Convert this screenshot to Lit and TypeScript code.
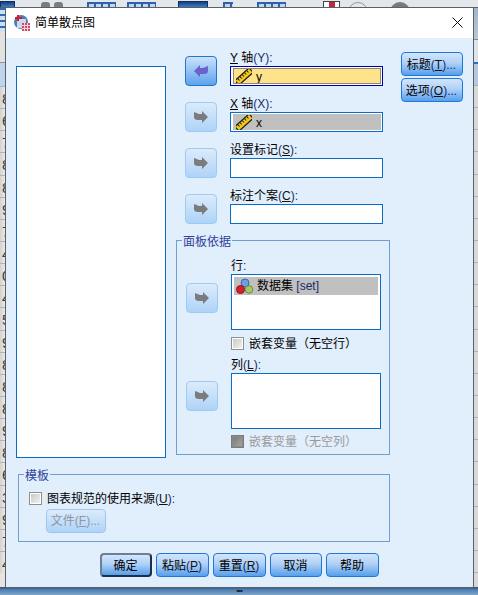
import { LitElement, html, css, svg } from "lit";
import { customElement } from "lit/decorators.js";

const arrow = (left: boolean) => html`<svg class="arr ${left ? "l" : "r"}" width="14" height="12" viewBox="0 0 14 12"><path d="M0 6 L6 0 V3 H9 L14 1 V6 Q14 9 10 9 H6 V12 Z"/></svg>`;
const ruler = html`<svg class="ico" width="16" height="15" viewBox="0 0 16 15"><g transform="rotate(-42 8 7.500)"><rect x="-1.500" y="4.500" width="19" height="6" fill="#f4c81c" stroke="#1a1a1a" stroke-width="1.200"/><path d="M2 5v2.500M5 5v2.500M8 5v2.500M11 5v2.500M14 5v2.500" stroke="#1a1a1a" stroke-width="1"/></g></svg>`;
const balls = html`<svg class="ico" width="18" height="17" viewBox="0 0 18 17"><circle cx="9" cy="5" r="4" fill="#6d9fe0" stroke="#3a67a8"/><circle cx="4.500" cy="11.500" r="4" fill="#d3202c" stroke="#8e1420"/><circle cx="13" cy="11.500" r="3.800" fill="#a4c868" stroke="#6b8f3a"/></svg>`;
const appIcon = svg`<svg width="16" height="16" viewBox="0 0 16 16"><circle cx="7" cy="7" r="7" fill="#4c7fb5"/><path d="M3 4h9v9H3z" fill="#c9d9ee"/><path d="M4 0v6M1 3h7" stroke="#d21c2c" stroke-width="2"/><rect x="8" y="8" width="8" height="8" fill="#d04a64"/><path d="M8 10.500h8M8 13.500h8M10.500 8v8M13.500 8v8" stroke="#f5d5dc"/></svg>`;

const M = (pre: string, key: string, post = "") => html`${pre}<span class="lat">(<u>${key}</u>)${post}</span>`;

@customElement("app-root")
export class AppRoot extends LitElement {
  static styles = css`
    :host { display: block; position: relative; width: 478px; height: 595px; overflow: hidden; background: #e6e6e4;
      font: 12px/14px "Liberation Sans", "Noto Sans CJK SC", sans-serif; color: #000; }
    * { box-sizing: border-box; }
    .top { position: absolute; inset: 0 0 auto 0; height: 8px; overflow: hidden; background: #e3e6ea; border-bottom: 1px solid #5a5f66; }
    .top i { position: absolute; top: 2px; height: 8px; display: block; }
    .tb1 { background: repeating-linear-gradient(90deg, #2f62ad 0 2px, #c4d6ee 2px 7px); border-top: 2px solid #2f62ad; }
    .tb2 { top: 1px !important; background: linear-gradient(#153f88, #3f8bd2); border: 1px solid #1a2c58; }
    .tb3 { background: #7d7d7d; border-radius: 3px 3px 0 0; }
    .tb4 { background: linear-gradient(90deg, #fff 0 5px, #c2283a 5px 11px, #fff 11px); border: 1px solid #444; top: 1px !important; }
    .tb5 { background: transparent; border: 1px solid #999; border-radius: 50%; height: 20px !important; }
    .tb6 { background: #7a7a7a; border-radius: 50%; height: 20px !important; }
    .side { position: absolute; left: 0; top: 8px; width: 6px; bottom: 8px; overflow: hidden; background: #e6e4e0; }
    .side .hd { height: 24px; background: repeating-linear-gradient(#2d6fb0 0 2px, #cfe0f2 2px 6px); }
    .side .hd2 { height: 31px; background: #e2e2e0; border-bottom: 1px solid #8a94a0; }
    .side .hd3 { height: 23px; background: #bfd3ea; }
    .side div.n { height: 22.150px; border-top: 1px solid #aab5c2; font: 15px/23px "Liberation Sans", sans-serif; color: #3a3a3a; white-space: nowrap; padding-left: 2px; background: linear-gradient(90deg, #d4d2ce, #efeeea); }
    .rs { position: absolute; right: 0; top: 8px; width: 5px; bottom: 8px; background: #d8d8d6; }
    .rs .a { height: 32px; background: linear-gradient(#a2b5ca, #b9c8d8); border-bottom: 1px solid #7d8a98; }
    .rs .b { height: 24px; background: #dfe3e8; border-bottom: 2px solid #2a6fc0; }
    .rs .c { height: 22px; background: #b4c8de; border-bottom: 1px solid #9fb0c4; }
    .rs .d { height: 22.150px; border-bottom: 1px solid #a3b2c4; }
    .bot { position: absolute; left: 0; right: 0; bottom: 0; height: 8px; background: linear-gradient(#2f4f74, #4f7fb2 35%, #7ea5cd); color: #123; font: 8px/8px "Liberation Sans", sans-serif; text-align: center; letter-spacing: -1px; }
    .dialog { position: absolute; left: 6px; top: 8px; width: 467px; height: 579px; background: #e1eefc; box-shadow: 0 0 0 1px #5a6068; display: flex; flex-direction: column; }
    .title { height: 30px; flex: none; background: #fff; display: flex; align-items: center; padding-left: 8px; gap: 5px; position: relative; }
    .title svg.close { position: absolute; right: 10px; top: 9px; }
    .main { display: flex; padding: 18px 0 0 10px; }
    .vars { width: 150px; height: 392px; margin-top: 10px; background: #fff; border: 1px solid #0a6cc4; flex: none; }
    .right { margin-left: 10px; width: 214px; flex: none; }
    .rows { display: flex; flex-direction: column; gap: 16px; }
    .row { display: flex; height: 30px; padding-left: 9px; gap: 13px; }
    .btn-a { width: 32px; height: 30px; flex: none; border-radius: 4px; display: flex; align-items: center; justify-content: center; border: 1px solid #9ccbf3; background: linear-gradient(#dcebfb, #aed3f8); padding: 0; }
    .btn-a.on { border-color: #1a78d0; background: linear-gradient(#cbe1fa, #5da2ee); }
    .arr.l { fill: #6a62cc; }
    .arr.r { fill: #7b7b7b; transform: scaleX(-1); }
    .cell { width: 153px; }
    .lab { display: block; height: 15px; margin-top: -5px; white-space: nowrap; }
    .lat { color: #1a2a6a; }
    .lat u { color: #111; }
    .field { height: 20px; background: #fff; border: 1px solid #0a6cc4; display: flex; }
    .field.sel { padding: 1px 1px 1px 2px; }
    .field.y { border-color: #0000a8; }
    .field .fill { flex: 1; display: flex; align-items: center; gap: 4px; padding: 1px 0 0 3px; }
    .field .ico { margin-top: -1px; }
    .field.y .fill { background: #ffe38c; outline: 1px solid #8e8a6a; outline-offset: -1px; }
    .field.x .fill { background: #c0c0c0; }
    fieldset { border: 1px solid #6f9fd0; border-radius: 0; margin: 0; padding: 0; min-width: 0; }
    legend { padding: 4px 1px 0; font-size: 12px; line-height: 16px; color: #2f3f9a; }
    .panel { margin-top: 6px; height: 225px; padding: 8px 0 0 9px; }
    .panel legend { margin-left: -4px; }
    .grow { display: flex; gap: 13px; }
    .grow .col { width: 150px; }
    .grow .col .lab { margin-top: 0; height: 16px; padding-top: 1px; }
    .b1 { margin-top: 25px; }
    .b2 { margin-top: 24px; }
    .box { height: 56px; background: #fff; border: 1px solid #0a6cc4; padding: 2px; }
    .item { height: 18px; background: #c0c0c0; display: flex; align-items: center; gap: 3px; padding-left: 2px; }
    .chk { display: flex; align-items: center; gap: 5px; height: 14px; white-space: nowrap; }
    .chk span.t { padding-top: 1px; }
    .chk b { width: 13px; height: 13px; flex: none; border: 1px solid #8f8f8f; box-shadow: inset 0 0 0 1px #fff; background: linear-gradient(135deg, #c4c4c4, #f6f6f6); }
    .chk.off { color: #9a9a9a; }
    .chk.off b { border-color: #7c7c7c; box-shadow: inset 0 0 0 1px #8a8a8a; background: linear-gradient(135deg, #767676, #a8a8a8); }
    .row1chk { margin-top: 6px; }
    .row2 { margin-top: 7px; }
    .row2chk { margin-top: 5px; }
    .tpl { margin: 6px 0 0 12px; width: 372px; height: 78px; padding: 8px 0 0 10px; }
    .tpl legend { margin-left: -5px; }
    .tpl .chk { height: 13px; }
    .tpl .f { display: flex; margin: 4px 0 0 17px; width: 60px; height: 24px; font: inherit; color: #9a9a9a; padding-top: 0; }
    .push { display: flex; align-items: center; justify-content: center; font: inherit; white-space: nowrap; padding: 2px 1px 0 0; border-radius: 4px; border: 1px solid #1f78d8; background: linear-gradient(#d2e5fb, #b0d1f6 45%, #569fec); color: #000; }
    .push.dis { border-color: #9cc8f0; background: linear-gradient(#dcebfb, #aed3f8); color: #8c97a3; }
    .push.def { border: 2px solid #2a4a72; border-color: #6d7f95 #1d2f48 #1d2f48 #6d7f95; }
    .actions { display: flex; gap: 4px; margin: 11px 0 0 94px; }
    .actions .push { height: 24px; }
    .w52 { width: 52px; } .w53 { width: 53px; }
    .side-btns { display: flex; flex-direction: column; gap: 2px; margin: -4px 0 0 11px; flex: none; }
    .side-btns .push { width: 62px; height: 24px; }
  `;

  render() {
    const digits = ["8","6","7","8","8","9","7","4","0","4","5","9","8","8","8","9","8","6","3","9","7","4"];
    return html`
      <div class="top">
        <i class="tb2" style="left:0;width:15px"></i><i class="tb3" style="left:41px;width:9px"></i><i class="tb3" style="left:54px;width:9px"></i>
        <i class="tb1" style="left:87px;width:29px"></i><i class="tb1" style="left:127px;width:29px"></i>
        <i class="tb2" style="left:178px;width:30px"></i><i class="tb1" style="left:223px;width:10px"></i>
        <i class="tb1" style="left:257px;width:29px"></i><i class="tb4" style="left:323px;width:17px"></i>
        <i class="tb5" style="left:348px;width:20px"></i><i class="tb6" style="left:390px;width:20px"></i>
      </div>
      <div class="side">
        <div class="hd"></div><div class="hd2"></div><div class="hd3"></div>
        ${digits.map((d) => html`<div class="n">${d}</div>`)}
      </div>
      <div class="rs">
        <div class="a"></div><div class="b"></div><div class="c"></div>
        ${digits.map(() => html`<div class="d"></div>`)}
      </div>
      <div class="bot">•••</div>
      <div class="dialog">
        <div class="title">
          ${appIcon}<span>简单散点图</span>
          <svg class="close" width="11" height="11" viewBox="0 0 11 11"><path d="M.5.5l10 10M10.500.5l-10 10" stroke="#111" fill="none"/></svg>
        </div>
        <div class="main">
          <div class="vars"></div>
          <div class="right">
            <div class="rows">
              <div class="row">
                <button class="btn-a on">${arrow(true)}</button>
                <div class="cell"><span class="lab"><u>Y</u> 轴<span class="lat">(Y):</span></span>
                  <div class="field sel y"><div class="fill">${ruler}<span>y</span></div></div></div>
              </div>
              <div class="row">
                <button class="btn-a">${arrow(false)}</button>
                <div class="cell"><span class="lab"><u>X</u> 轴<span class="lat">(X):</span></span>
                  <div class="field sel x"><div class="fill">${ruler}<span>x</span></div></div></div>
              </div>
              <div class="row">
                <button class="btn-a">${arrow(false)}</button>
                <div class="cell"><span class="lab">${M("设置标记", "S", ":")}</span><div class="field"></div></div>
              </div>
              <div class="row">
                <button class="btn-a">${arrow(false)}</button>
                <div class="cell"><span class="lab">${M("标注个案", "C", ":")}</span><div class="field"></div></div>
              </div>
            </div>
            <fieldset class="panel">
              <legend>面板依据</legend>
              <div class="grow">
                <button class="btn-a b1">${arrow(false)}</button>
                <div class="col">
                  <span class="lab">行<span class="lat">:</span></span>
                  <div class="box"><div class="item">${balls}<span>数据集 <span class="lat">[set]</span></span></div></div>
                  <label class="chk row1chk"><b></b><span class="t">嵌套变量（无空行）</span></label>
                </div>
              </div>
              <div class="grow row2">
                <button class="btn-a b2">${arrow(false)}</button>
                <div class="col">
                  <span class="lab">${M("列", "L", ":")}</span>
                  <div class="box"></div>
                  <label class="chk off row2chk"><b></b><span class="t">嵌套变量（无空列）</span></label>
                </div>
              </div>
            </fieldset>
          </div>
          <div class="side-btns">
            <button class="push"><span>${M("标题", "T", "...")}</span></button>
            <button class="push"><span>${M("选项", "O", "...")}</span></button>
          </div>
        </div>
        <fieldset class="tpl">
          <legend>模板</legend>
          <label class="chk"><b></b><span class="t">${M("图表规范的使用来源", "U", ":")}</span></label>
          <button class="push dis f"><span>文件(<u>F</u>)...</span></button>
        </fieldset>
        <div class="actions">
          <button class="push def w52">确定</button>
          <button class="push w53"><span>${M("粘贴", "P")}</span></button>
          <button class="push w53"><span>${M("重置", "R")}</span></button>
          <button class="push w52">取消</button>
          <button class="push w53">帮助</button>
        </div>
      </div>
    `;
  }
}
